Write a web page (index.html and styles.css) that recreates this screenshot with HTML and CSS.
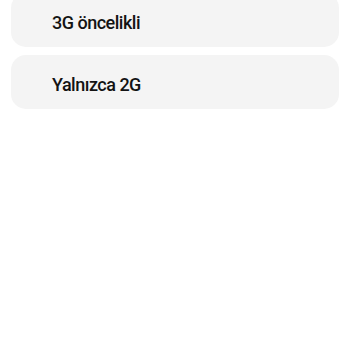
FILE: index.html
```html
<!DOCTYPE html>
<html lang="tr">
<head>
    <meta charset="UTF-8">
    <meta name="viewport" content="width=device-width, initial-scale=1.0">
    <title>Ağ modu</title>
    <link rel="stylesheet" href="styles.css">
</head>
<body>
    <div class="options">
        <div class="option">3G öncelikli</div>
        <div class="option">Yalnızca 2G</div>
    </div>
</body>
</html>
```

FILE: styles.css
```css
body {
    margin: 0;
    background: #ffffff;
    font-family: Roboto, "Noto Sans", sans-serif;
    color: #131313;
}
.options {
    display: flex;
    flex-direction: column;
    gap: 8px;
    margin: -7px 11px 0;
}
.option {
    box-sizing: border-box;
    height: 54px;
    padding: 21px 0 0 41px;
    background: #f4f4f4;
    border-radius: 15px;
    font-size: 18px;
    line-height: 18px;
    font-weight: 500;
    letter-spacing: -0.5px;
}
```
